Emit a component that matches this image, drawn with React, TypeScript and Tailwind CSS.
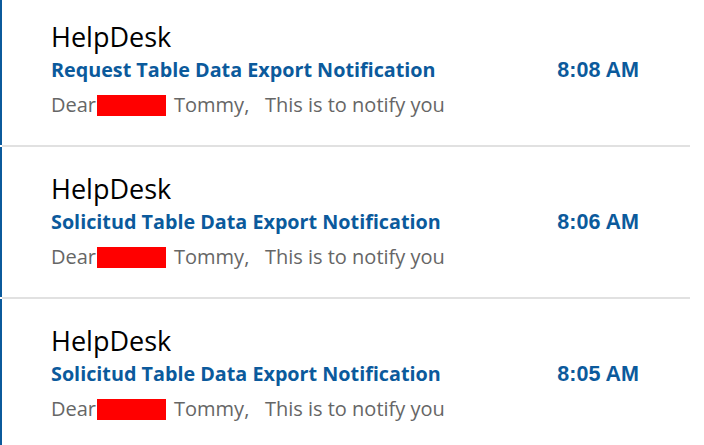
const messages = [
	{ id: 1, subject: 'Request Table Data Export Notification', time: '8:08 AM' },
	{ id: 2, subject: 'Solicitud Table Data Export Notification', time: '8:06 AM' },
	{ id: 3, subject: 'Solicitud Table Data Export Notification', time: '8:05 AM' },
]

interface MessageItemProps {
	subject: string
	time: string
}

const MessageItem = ({ subject, time }: MessageItemProps) => {
	return (
		<div className="flex flex-col">
			<div className="h-[150px] border-l-2 border-[#0b5a9c] pl-[49px] pr-[51px] pt-[24px]">
				<div className="text-[27px] leading-[36px] text-black font-['Open_Sans',sans-serif]">
					HelpDesk
				</div>
				<div className="flex items-center justify-between h-[30px]">
					<span className="text-[19.75px] leading-[30px] font-bold text-[#0b5a9c] font-['Open_Sans',sans-serif]">
						{subject}
					</span>
					<span className="text-[21.5px] leading-[30px] font-bold text-[#0b5a9c] font-['Liberation_Sans',Arial,sans-serif]">
						{time}
					</span>
				</div>
				<div className="flex items-center mt-[6px] h-[28px] text-[20px] leading-[28px] text-[#666666] font-['Open_Sans',sans-serif]">
					<span>Dear</span>
					<span className="inline-block w-[69px] h-[21px] bg-[#ff0000] ml-[1px] mr-[8px]" />
					<span className="whitespace-pre">Tommy,   This is to notify you</span>
				</div>
			</div>
			<div className="ml-[2px] h-[2px] bg-[#e1e1e1]" />
		</div>
	)
}

const App = () => {
	return (
		<div className="w-[704px] h-[445px] overflow-hidden bg-white">
			<div className="w-[690px] flex flex-col -mt-[5px]">
				{messages.map((m) => (
					<MessageItem key={m.id} subject={m.subject} time={m.time} />
				))}
			</div>
		</div>
	)
}

export default App
